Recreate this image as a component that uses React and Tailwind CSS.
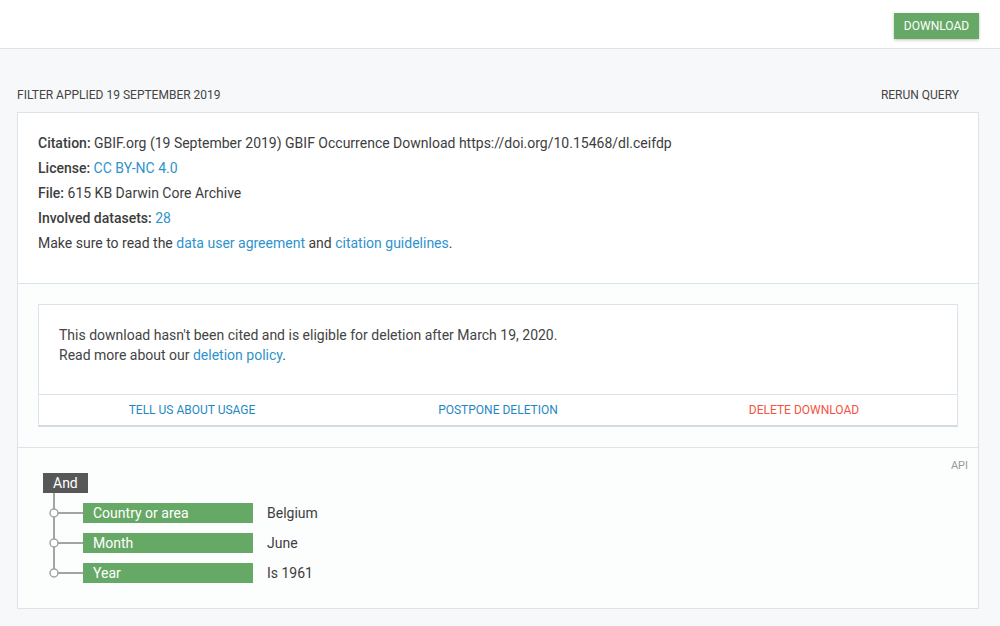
import React from "react";

const rows = [
  { label: "Country or area", value: "Belgium" },
  { label: "Month", value: "June" },
  { label: "Year", value: "Is 1961" },
];

const Link = ({ children }) => <a className="text-[#2f93cc]">{children}</a>;

const Connector = ({ first, last }) => (
  <svg width="40" height="30" className="shrink-0 overflow-visible">
    <line x1="11" y1={first ? -5 : 0} x2="11" y2={last ? 15 : 30} stroke="#a3a3a3" strokeWidth="2" />
    <line x1="14" y1="15" x2="40" y2="15" stroke="#a3a3a3" strokeWidth="2" />
    <circle cx="11" cy="15" r="4" fill="#fff" stroke="#a3a3a3" strokeWidth="1.5" />
  </svg>
);

export default function App() {
  return (
    <div className="min-h-[626px] bg-[#f7f8fa] text-[#3d3d3d]" style={{ fontFamily: "Roboto, 'Liberation Sans', sans-serif" }}>
      {/* Header */}
      <div className="h-[49px] bg-white border-b border-[#dde3ea] flex items-start justify-end pt-[13px] pr-[21px]">
        <button className="h-[26px] w-[85px] bg-[#66a866] text-white text-[12px] shadow-[0_1px_3px_rgba(0,0,0,0.25)]">
          DOWNLOAD
        </button>
      </div>

      <div className="pl-[17px] pr-[21px]">
        <div className="pt-[38px] h-[63px] flex justify-between text-[12px] leading-[16px] text-[#444]">
          <span>FILTER APPLIED 19 SEPTEMBER 2019</span>
          <span className="pr-[20px]">RERUN QUERY</span>
        </div>

        <div className="border border-[#dde3ea] bg-white">
          {/* Summary */}
          <div className="pt-[18px] pb-[27px] px-[20px] text-[14px] leading-[25px]">
            <div><b className="font-medium">Citation:</b> GBIF.org (19 September 2019) GBIF Occurrence Download https://doi.org/10.15468/dl.ceifdp</div>
            <div><b className="font-medium">License:</b> <Link>CC BY-NC 4.0</Link></div>
            <div><b className="font-medium">File:</b> 615 KB Darwin Core Archive</div>
            <div><b className="font-medium">Involved datasets:</b> <Link>28</Link></div>
            <div>Make sure to read the <Link>data user agreement</Link> and <Link>citation guidelines</Link>.</div>
          </div>

          {/* Deletion notice */}
          <div className="border-t border-[#dde3ea] bg-[#fcfdfd] p-[20px]">
            <div className="bg-white border border-[#dde3ea] border-b-2 border-b-[#d3dbe2]">
              <div className="pt-[20px] pb-[29px] px-[20px] text-[14px] leading-[20px] text-[#444]">
                <div>This download hasn't been cited and is eligible for deletion after March 19, 2020.</div>
                <div>Read more about our <Link>deletion policy</Link>.</div>
              </div>
              <div className="border-t border-[#dde3ea] grid grid-cols-3 h-[31px] items-center text-[12px] text-center">
                <span className="text-[#1f88c4]">TELL US ABOUT USAGE</span>
                <span className="text-[#1f88c4]">POSTPONE DELETION</span>
                <span className="text-[#f4533f]">DELETE DOWNLOAD</span>
              </div>
            </div>
          </div>

          {/* Query tree */}
          <div className="border-t border-[#dde3ea] bg-[#fcfdfd] pt-[11px] pb-[20px] pl-[25px] pr-[10px]">
            <div className="flex justify-end h-[14px] text-[11px] leading-[14px] text-[#999]">API</div>
            <div className="flex flex-col">
              <div className="w-fit h-[20px] bg-[#575757] text-white text-[14px] leading-[20px] px-[10px]">And</div>
              <div className="pt-[5px]">
                {rows.map((r, i) => (
                  <div key={r.label} className="flex items-center h-[30px]">
                    <Connector first={i === 0} last={i === rows.length - 1} />
                    <div className="w-[170px] h-[20px] bg-[#66a866] text-white text-[14px] leading-[20px] px-[10px]">{r.label}</div>
                    <div className="pl-[14px] text-[14px] leading-[20px] text-[#3d3d3d]">{r.value}</div>
                  </div>
                ))}
              </div>
            </div>
          </div>
        </div>
      </div>
    </div>
  );
}
